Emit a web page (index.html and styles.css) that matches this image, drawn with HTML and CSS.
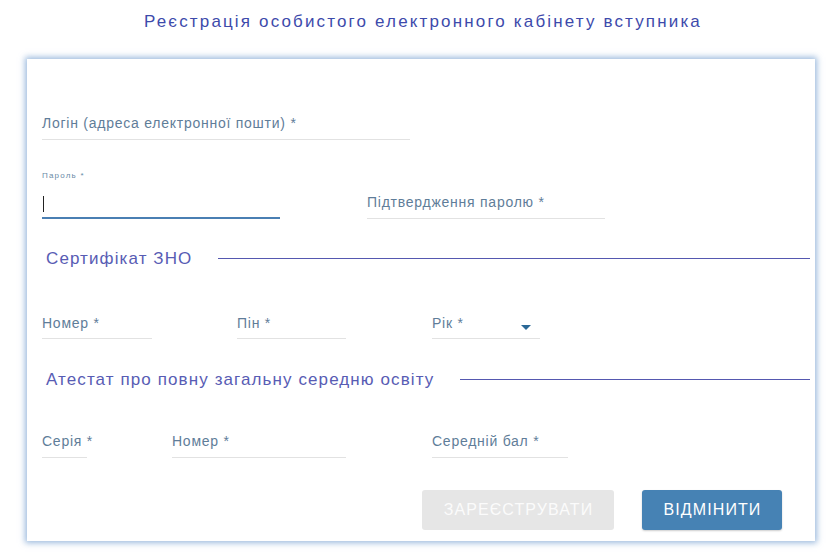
FILE: index.html
```html
<!DOCTYPE html>
<html lang="uk">
<head>
<meta charset="utf-8">
<title>Реєстрація</title>
<link rel="stylesheet" href="styles.css">
</head>
<body>
<h1 class="title">Реєстрація особистого електронного кабінету вступника</h1>
<div class="card">
  <div class="row row-login">
    <div class="field w-login"><span class="label">Логін (адреса електронної пошти) *</span></div>
  </div>
  <div class="row row-pass">
    <div class="field field-active w-pass">
      <span class="small-label">Пароль *</span>
      <span class="input"><span class="cursor"></span></span>
    </div>
    <div class="field w-pass"><span class="label">Підтвердження паролю *</span></div>
  </div>
  <div class="section sec1">
    <span class="section-title">Сертифікат ЗНО</span>
    <span class="section-line"></span>
  </div>
  <div class="row row-zno">
    <div class="field w-num"><span class="label">Номер *</span></div>
    <div class="field w-pin"><span class="label">Пін *</span></div>
    <div class="field w-year"><span class="label">Рік *</span><span class="arrow"></span></div>
  </div>
  <div class="section sec2">
    <span class="section-title">Атестат про повну загальну середню освіту</span>
    <span class="section-line"></span>
  </div>
  <div class="row row-att">
    <div class="field w-ser"><span class="label">Серія *</span></div>
    <div class="field w-anum"><span class="label">Номер *</span></div>
    <div class="field w-avg"><span class="label">Середній бал *</span></div>
  </div>
  <div class="buttons">
    <button class="btn btn-disabled">ЗАРЕЄСТРУВАТИ</button>
    <button class="btn btn-primary">ВІДМІНИТИ</button>
  </div>
</div>
</body>
</html>
```
FILE: styles.css
```css
html, body {
  margin: 0;
  padding: 0;
  background: #ffffff;
}
body {
  font-family: "Liberation Sans", Arial, sans-serif;
  width: 840px;
  height: 555px;
  overflow: hidden;
}
.title {
  margin: 0;
  padding-top: 12px;
  height: 20px;
  line-height: 20px;
  font-size: 17px;
  font-weight: normal;
  text-align: center;
  color: #3d4aab;
  letter-spacing: 2.15px;
  padding-left: 6px;
}
.card {
  margin: 27px 25px 0 27px;
  width: 788px;
  height: 482px;
  box-sizing: border-box;
  padding: 0 5px 0 15px;
  background: #fff;
  box-shadow: 0 0 6px 2px rgba(105, 150, 205, 0.65);
  overflow: hidden;
}
.row {
  display: flex;
  align-items: flex-end;
}
.field {
  position: relative;
  box-sizing: border-box;
  border-bottom: 1px solid #e2e2e2;
  padding-bottom: 8px;
  display: flex;
  flex-direction: column;
}
.label {
  font-size: 14px;
  line-height: 16px;
  letter-spacing: 0.75px;
  color: #5f7d99;
  white-space: nowrap;
}
.row-login { margin-top: 56px; }
.w-login { width: 368px; }
.row-pass { margin-top: 31px; gap: 87px; }
.w-pass { width: 238px; }
.field-active {
  border-bottom: 2px solid #4a7fb3;
  padding-bottom: 3px;
}
.small-label {
  font-size: 8px;
  line-height: 9px;
  letter-spacing: 1.2px;
  color: #6a8aa6;
}
.input {
  height: 21px;
  margin-top: 13px;
  display: flex;
  align-items: center;
}
.cursor {
  width: 1px;
  height: 16px;
  background: #222;
  margin-left: 1px;
}
.section {
  display: flex;
  align-items: center;
  gap: 26px;
  height: 20px;
}
.sec1 { margin-top: 30px; }
.sec2 { margin-top: 31px; }
.section-title {
  font-size: 17px;
  line-height: 20px;
  letter-spacing: 1.1px;
  color: #585cb4;
  margin-left: 4px;
  white-space: nowrap;
}
.section-line {
  flex: 1;
  height: 1px;
  background: #5558b0;
  margin-top: -1px;
}
.row-zno { margin-top: 46px; }
.row-zno .field { padding-bottom: 7px; }
.w-num { width: 110px; margin-right: 85px; }
.w-pin { width: 109px; margin-right: 86px; }
.w-year { width: 108px; }
.arrow {
  position: absolute;
  left: 89px;
  top: 10px;
  width: 0;
  height: 0;
  border-left: 5px solid transparent;
  border-right: 5px solid transparent;
  border-top: 5px solid #2a6896;
}
.row-att { margin-top: 43px; }
.w-ser { width: 45px; margin-right: 85px; }
.w-anum { width: 174px; margin-right: 86px; }
.w-avg { width: 136px; }
.buttons {
  display: flex;
  gap: 28px;
  margin-top: 32px;
  margin-left: 380px;
}
.btn {
  height: 40px;
  border: none;
  border-radius: 3px;
  font-family: "Liberation Sans", Arial, sans-serif;
  font-size: 16px;
  letter-spacing: 1.1px;
  padding: 0 0 0 1px;
}
.btn-disabled {
  width: 192px;
  background: #e6e6e6;
  color: #fbfbfb;
}
.btn-primary {
  width: 140px;
  background: #4682b4;
  color: #ffffff;
  box-shadow: 0 1px 2px rgba(0,0,0,0.2);
}
```
